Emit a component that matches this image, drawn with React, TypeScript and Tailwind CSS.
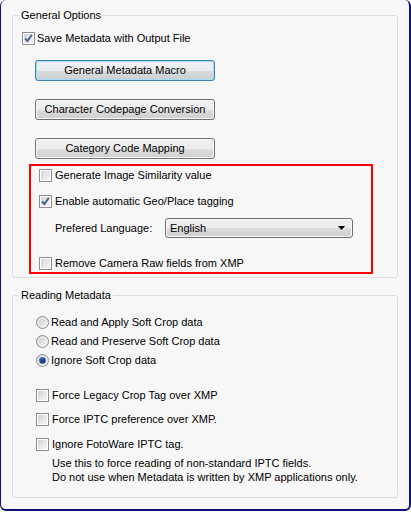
import React from "react";

const FONT = "font-['Liberation_Sans',Arial,sans-serif]";

const CheckBox = ({ checked = false }: { checked?: boolean }) => (
  <svg width="13" height="13" viewBox="0 0 13 13" className="shrink-0">
    <defs>
      <linearGradient id="cbfill" x1="0" y1="0" x2="1" y2="1">
        <stop offset="0" stopColor="#d4d4d4" />
        <stop offset="1" stopColor="#f7f7f7" />
      </linearGradient>
    </defs>
    <rect x="0.5" y="0.5" width="12" height="12" fill="#fdfdfd" stroke="#8e8f8f" />
    <rect x="2" y="2" width="9" height="9" fill="url(#cbfill)" />
    {checked && (
      <path
        d="M3.2 6.4 L5.4 9.2 L9.8 2.8"
        fill="none"
        stroke="#4a5f92"
        strokeWidth="1.9"
        strokeLinejoin="round"
      />
    )}
  </svg>
);

const Radio = ({ checked = false }: { checked?: boolean }) => (
  <svg width="13" height="13" viewBox="0 0 13 13" className="shrink-0">
    <defs>
      <linearGradient id="rdfill" x1="0" y1="0" x2="1" y2="1">
        <stop offset="0" stopColor="#c8c8c8" />
        <stop offset="1" stopColor="#f8f8f8" />
      </linearGradient>
      <radialGradient id="rddot" cx="0.4" cy="0.35" r="0.7">
        <stop offset="0" stopColor="#2c6cc0" />
        <stop offset="0.6" stopColor="#153e78" />
        <stop offset="1" stopColor="#0c2650" />
      </radialGradient>
    </defs>
    <circle cx="6.5" cy="6.5" r="6" fill="url(#rdfill)" stroke="#8e8f8f" />
    <circle cx="6.5" cy="6.5" r="4.5" fill="none" stroke="#f3f3f3" />
    {checked && <circle cx="6.5" cy="6.5" r="3.2" fill="url(#rddot)" stroke="#5b8fd0" strokeWidth="0.8" />}
  </svg>
);

const WinButton = ({ label, focused = false }: { label: string; focused?: boolean }) => (
  <div
    className={`ml-[22px] w-[180px] h-[21px] flex items-center justify-center rounded-[3px] border text-[11px] text-black ${
      focused
        ? "border-[#3c7fb1] shadow-[inset_0_0_0_1px_#a6dcf6] bg-[linear-gradient(to_bottom,#f0f2f3_0%,#e8ebec_50%,#d9dcde_51%,#cbcfd1_100%)]"
        : "border-[#707070] shadow-[inset_0_0_0_1px_#fbfbfb] bg-[linear-gradient(to_bottom,#f2f2f2_0%,#ebebeb_50%,#dddddd_51%,#cfcfcf_100%)]"
    }`}
  >
    {label}
  </div>
);

const Row = ({ children, className = "" }: { children: React.ReactNode; className?: string }) => (
  <div className={`h-[13px] flex items-center ${className}`}>{children}</div>
);

export default function App() {
  return (
    <div
      className={`${FONT} w-[411px] h-[511px] bg-[#f7f7f7] border-l border-r-2 border-b-2 border-t-0 border-[#10107c] rounded-[6px] text-[11px] leading-[13px] text-black flex flex-col`}
    >
      {/* General Options */}
      <fieldset className="mt-[9px] mx-[11px] h-[269px] border border-[#d5dfe5] rounded-[3px] shrink-0">
        <legend className="ml-[6px] px-[2px] leading-[13px]">General Options</legend>
        <div className="flex flex-col">
          <Row className="mt-[10px] pl-[9px] gap-[2px]">
            <CheckBox checked />
            <span>Save Metadata with Output File</span>
          </Row>

          <div className="mt-[15px]">
            <WinButton label="General Metadata Macro" focused />
          </div>
          <div className="mt-[18px]">
            <WinButton label="Character Codepage Conversion" />
          </div>
          <div className="mt-[18px]">
            <WinButton label="Category Code Mapping" />
          </div>

          {/* highlighted options */}
          <div className="mt-[5px] ml-[16px] w-[344px] h-[110px] border-2 border-[#ff0000] pl-[8px] flex flex-col">
            <Row className="mt-[3px] gap-[3px]">
              <CheckBox />
              <span>Generate Image Similarity value</span>
            </Row>
            <Row className="mt-[13px] gap-[3px]">
              <CheckBox checked />
              <span>Enable automatic Geo/Place tagging</span>
            </Row>
            <div className="mt-[10px] h-[20px] flex items-center pl-[16px]">
              <span className="w-[110px]">Prefered Language:</span>
              <div className="w-[188px] h-[20px] flex items-center justify-between pl-[4px] pr-[7px] rounded-[3px] border border-[#707070] shadow-[inset_0_0_0_1px_#fafafa] bg-[linear-gradient(to_bottom,#f2f2f2_0%,#ebebeb_50%,#dddddd_51%,#cfcfcf_100%)]">
                <span>English</span>
                <svg width="7" height="4" viewBox="0 0 7 4">
                  <path d="M0 0 H7 L3.5 4 Z" fill="#000" />
                </svg>
              </div>
            </div>
            <Row className="mt-[19px] gap-[3px]">
              <CheckBox />
              <span>Remove Camera Raw fields from XMP</span>
            </Row>
          </div>
        </div>
      </fieldset>

      {/* Reading Metadata */}
      <fieldset className="mt-[11px] mx-[11px] h-[209px] border border-[#d5dfe5] rounded-[3px] shrink-0">
        <legend className="ml-[6px] px-[2px] leading-[13px]">Reading Metadata</legend>
        <div className="flex flex-col pl-[23px]">
          <Row className="mt-[14px] gap-[2px]">
            <Radio />
            <span>Read and Apply Soft Crop data</span>
          </Row>
          <Row className="mt-[6px] gap-[2px]">
            <Radio />
            <span>Read and Preserve Soft Crop data</span>
          </Row>
          <Row className="mt-[6px] gap-[2px]">
            <Radio checked />
            <span>Ignore Soft Crop data</span>
          </Row>

          <Row className="mt-[22px] gap-[3px]">
            <CheckBox />
            <span>Force Legacy Crop Tag over XMP</span>
          </Row>
          <Row className="mt-[11px] gap-[3px]">
            <CheckBox />
            <span>Force IPTC preference over XMP.</span>
          </Row>
          <Row className="mt-[12px] gap-[3px]">
            <CheckBox />
            <span>Ignore FotoWare IPTC tag.</span>
          </Row>
          <div className="mt-[5px] pl-[16px] leading-[14px]">
            <div>Use this to force reading of non-standard IPTC fields.</div>
            <div>Do not use when Metadata is written by XMP applications only.</div>
          </div>
        </div>
      </fieldset>
    </div>
  );
}
